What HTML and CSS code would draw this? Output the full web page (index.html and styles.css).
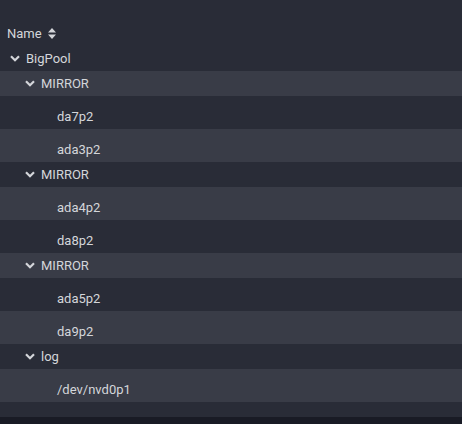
FILE: index.html
```html
<!DOCTYPE html>
<html>
<head>
<meta charset="utf-8">
<link rel="stylesheet" href="styles.css">
</head>
<body>
<div class="table">
  <div class="header">
    <span class="hname">Name</span>
    <svg class="sort" width="8" height="11" viewBox="0 0 8 11"><path d="M4 0 L8 4.5 L0 4.5 Z M0 6.5 L8 6.5 L4 11 Z" fill="#d4d6da"/></svg>
  </div>
  <div class="rows">
    <div class="row group l0 dark"><svg class="chev" width="10" height="7" viewBox="0 0 10 7"><path d="M1 1.2 L5 5.2 L9 1.2" fill="none" stroke="#d4d6da" stroke-width="2.2"/></svg><span>BigPool</span></div>
    <div class="row group l1 light"><svg class="chev" width="10" height="7" viewBox="0 0 10 7"><path d="M1 1.2 L5 5.2 L9 1.2" fill="none" stroke="#d4d6da" stroke-width="2.2"/></svg><span>MIRROR</span></div>
    <div class="row leaf dark"><span>da7p2</span></div>
    <div class="row leaf light"><span>ada3p2</span></div>
    <div class="row group l1 dark"><svg class="chev" width="10" height="7" viewBox="0 0 10 7"><path d="M1 1.2 L5 5.2 L9 1.2" fill="none" stroke="#d4d6da" stroke-width="2.2"/></svg><span>MIRROR</span></div>
    <div class="row leaf light"><span>ada4p2</span></div>
    <div class="row leaf dark"><span>da8p2</span></div>
    <div class="row group l1 light"><svg class="chev" width="10" height="7" viewBox="0 0 10 7"><path d="M1 1.2 L5 5.2 L9 1.2" fill="none" stroke="#d4d6da" stroke-width="2.2"/></svg><span>MIRROR</span></div>
    <div class="row leaf dark"><span>ada5p2</span></div>
    <div class="row leaf light"><span>da9p2</span></div>
    <div class="row group l1 dark"><svg class="chev" width="10" height="7" viewBox="0 0 10 7"><path d="M1 1.2 L5 5.2 L9 1.2" fill="none" stroke="#d4d6da" stroke-width="2.2"/></svg><span>log</span></div>
    <div class="row leaf light"><span>/dev/nvd0p1</span></div>
  </div>
  <div class="spacer"></div>
</div>
<div class="footer"></div>
</body>
</html>
```
FILE: styles.css
```css
html, body {
  margin: 0;
  padding: 0;
  background: #191b25;
}
body {
  width: 462px;
  height: 424px;
  overflow: hidden;
  font-family: Roboto, "Liberation Sans", sans-serif;
  font-size: 13px;
  color: #d4d6da;
}
.table {
  background: #292c37;
  padding-top: 20px;
}
.header {
  height: 26px;
  display: flex;
  align-items: center;
  padding-left: 7px;
  gap: 6px;
}
.sort {
  display: block;
}
.row {
  display: flex;
  align-items: center;
  box-sizing: border-box;
}
.group {
  height: 25px;
}
.leaf {
  height: 33px;
  padding-left: 57px;
  padding-top: 8px;
}
.l0 {
  padding-left: 10px;
}
.l1 {
  padding-left: 25px;
}
.chev {
  display: block;
  margin-right: 6px;
}
.dark {
  background: #292c37;
}
.light {
  background: #393c47;
}
.spacer {
  height: 15px;
}
.footer {
  height: 7px;
  background: #191b25;
}
```
